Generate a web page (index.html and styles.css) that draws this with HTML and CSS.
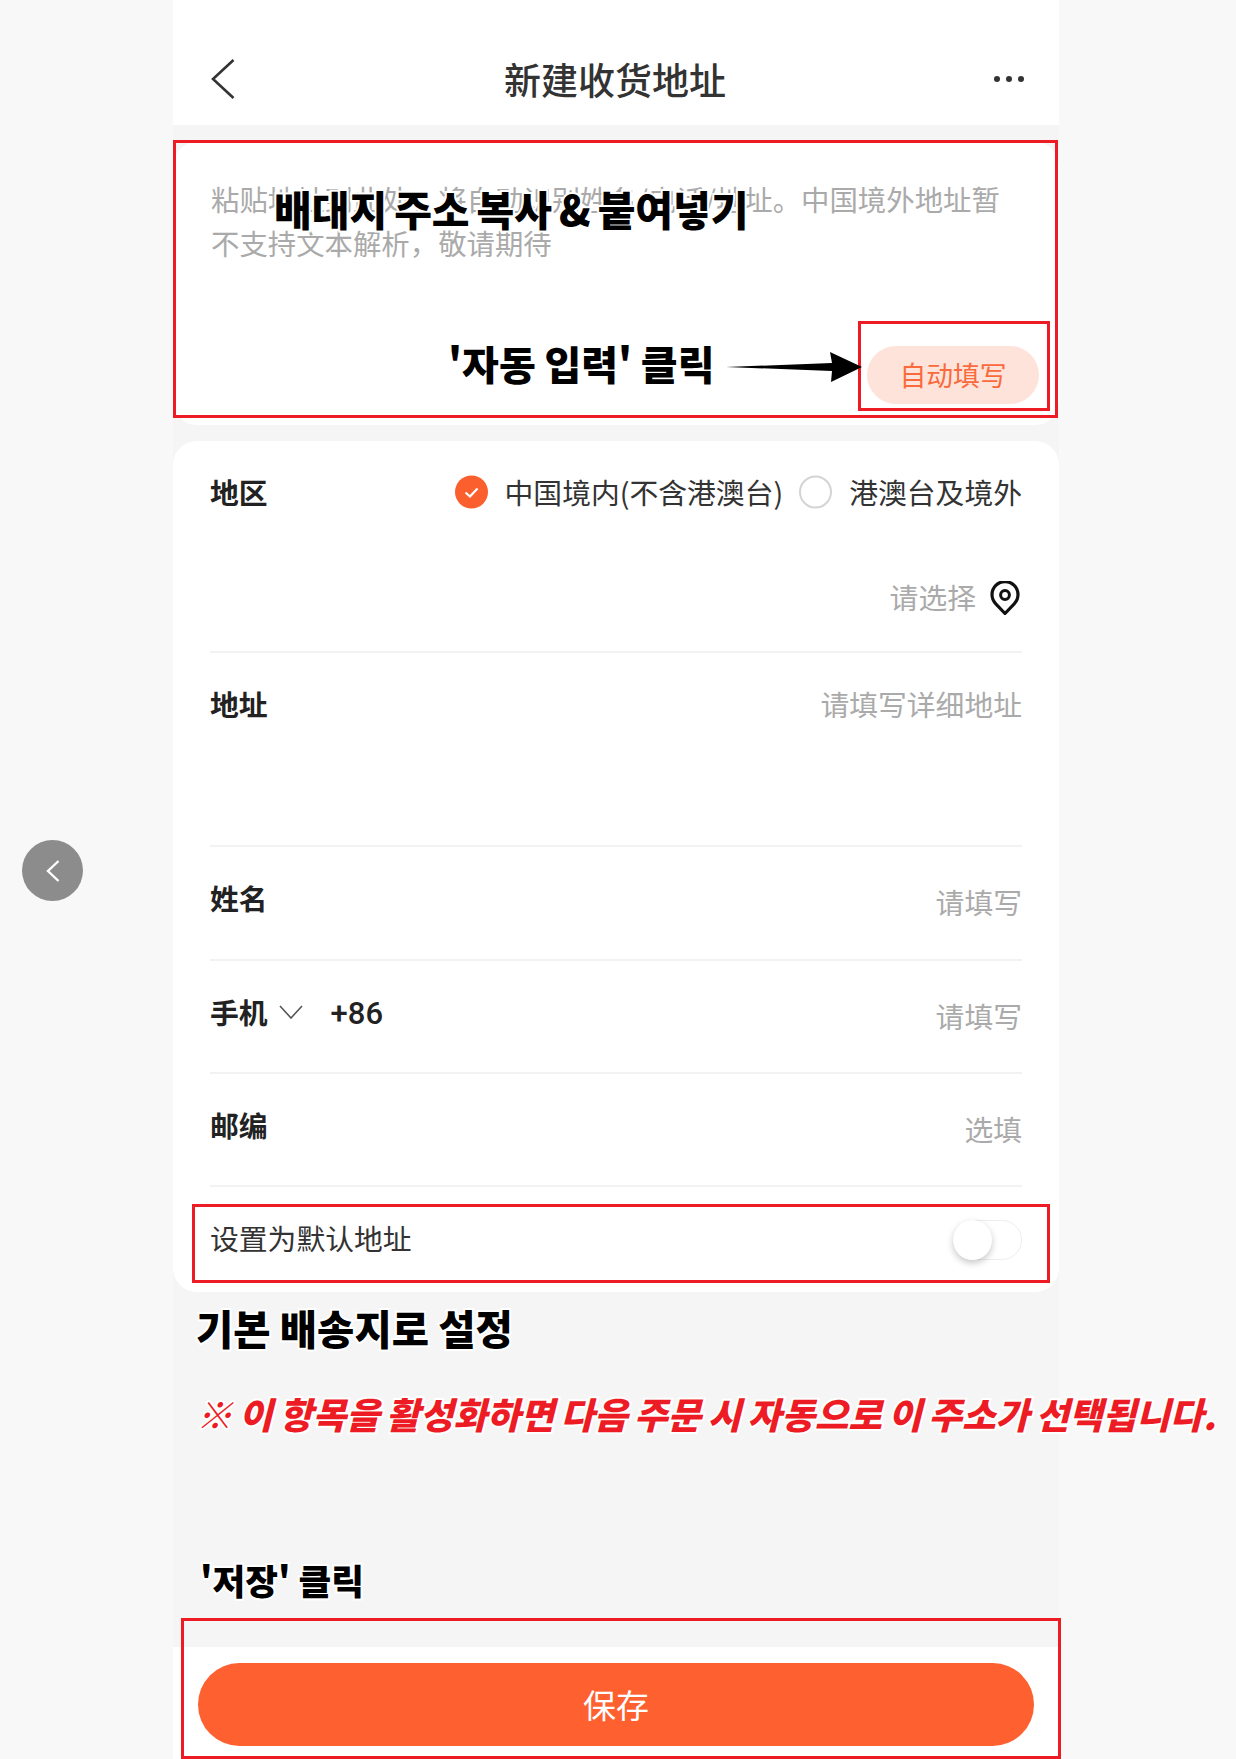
FILE: index.html
```html
<!DOCTYPE html>
<html lang="zh-CN">
<head>
<meta charset="utf-8">
<title>新建收货地址</title>
<link rel="stylesheet" href="styles.css">
</head>
<body>
<div class="page">
  <main class="phone">
    <header class="topbar">
      <svg class="back" width="24" height="40" viewBox="0 0 24 40"><path d="M22.5 1 L2 20 L22.5 39" fill="none" stroke="#333" stroke-width="2.6"/></svg>
      <h1 class="title">新建收货地址</h1>
      <div class="dots"><span></span><span></span><span></span></div>
    </header>

    <section class="card paste">
      <p class="paste-hint">粘贴地址到此处，将自动识别姓名/电话/地址。中国境外地址暂不支持文本解析，敬请期待</p>
      <button class="autofill">自动填写</button>
    </section>

    <section class="card form">
      <div class="row row-region">
        <div class="row-line">
          <span class="label">地区</span>
          <div class="radios">
            <svg class="radio" width="33" height="34" viewBox="0 0 33 34"><circle cx="16.5" cy="17" r="16.5" fill="#fb5f2d"/><path d="M10.5 17.5 L15 21.5 L22.5 13.5" fill="none" stroke="#fff" stroke-width="2.2"/></svg>
            <span class="radio-text">中国境内(不含港澳台)</span>
            <svg class="radio radio-off" width="33" height="34" viewBox="0 0 33 34"><circle cx="16.5" cy="17" r="15.5" fill="#fff" stroke="#d4d4d4" stroke-width="2"/></svg>
            <span class="radio-text">港澳台及境外</span>
          </div>
        </div>
        <div class="select-line">
          <span class="hint">请选择</span>
          <svg class="pin" width="30" height="34" viewBox="0 0 30 34"><path d="M15 32.5 L5.8 22.8 A13 13 0 1 1 24.2 22.8 Z" fill="none" stroke="#111" stroke-width="3.2" stroke-linejoin="round"/><circle cx="15" cy="14" r="4.4" fill="none" stroke="#111" stroke-width="3"/></svg>
        </div>
      </div>
      <div class="row row-address">
        <div class="row-line">
          <span class="label">地址</span>
          <span class="hint">请填写详细地址</span>
        </div>
      </div>
      <div class="row row-name">
        <div class="row-line">
          <span class="label">姓名</span>
          <span class="hint hint-low">请填写</span>
        </div>
      </div>
      <div class="row row-short">
        <div class="row-line">
          <span class="phone-field">
            <span class="label">手机</span>
            <svg class="caret" width="24" height="14" viewBox="0 0 24 14"><path d="M1 1 L12 13 L23 1" fill="none" stroke="#555" stroke-width="1.6"/></svg>
            <span class="code">+86</span>
          </span>
          <span class="hint hint-low">请填写</span>
        </div>
      </div>
      <div class="row row-short">
        <div class="row-line">
          <span class="label">邮编</span>
          <span class="hint hint-low">选填</span>
        </div>
      </div>
      <div class="default-line">
        <span class="default-text">设置为默认地址</span>
        <div class="toggle"><span class="knob"></span></div>
      </div>
    </section>

    <section class="notes" lang="ko">
      <p class="note note-main">기본 배송지로 설정</p>
      <p class="note note-red">※ 이 항목을 활성화하면 다음 주문 시 자동으로 이 주소가 선택됩니다.</p>
      <p class="note note-save">'저장' 클릭</p>
    </section>

    <footer class="savebar">
      <button class="save">保存</button>
    </footer>
  </main>

  <button class="float-back">
    <svg width="14" height="22" viewBox="0 0 14 22"><path d="M12.5 1 L2 11 L12.5 21" fill="none" stroke="#fff" stroke-width="2.4"/></svg>
  </button>

  <div class="mark mark-paste"></div>
  <div class="mark mark-auto"></div>
  <div class="mark mark-default"></div>
  <div class="mark mark-save"></div>
  <p class="note note-copy" lang="ko">배대지 주소 복사 &amp; 붙여넣기</p>
  <p class="note note-auto" lang="ko">'자동 입력' 클릭</p>
  <svg class="arrow" width="136" height="30" viewBox="0 0 136 30"><path d="M0 15 L106 11 L104 0 L136 15 L105 30 L106 19 Z" fill="#000"/></svg>
</div>
</body>
</html>
```
FILE: styles.css
```css
* { box-sizing: border-box; }
html, body { margin: 0; padding: 0; }
body {
  background: #f8f8f8;
  font-family: "Noto Sans CJK SC", "Noto Sans", sans-serif;
  color: #333;
}
p, h1 { margin: 0; }
button { border: 0; font-family: inherit; padding: 0; }

.page {
  position: relative;
  width: 1236px;
  height: 1759px;
  overflow: hidden;
}
.phone {
  width: 886px;
  height: 1759px;
  margin-left: 173px;
  background: #f5f5f5;
  display: flex;
  flex-direction: column;
}

.topbar {
  height: 125px;
  background: #fff;
  padding: 48px 35px 16px 33px;
  display: grid;
  grid-template-columns: 1fr auto 1fr;
  align-items: center;
}
.back { margin-left: 5px; }
.title {
  font-size: 37px;
  font-weight: 500;
  line-height: 50px;
  color: #333;
}
.dots { display: flex; justify-content: flex-end; gap: 6px; }
.dots span { width: 6px; height: 6px; border-radius: 50%; background: #333; }

.card { background: #fff; border-radius: 24px; }

.paste {
  margin-top: 17px;
  height: 283px;
  padding: 35px 20px 21px 38px;
  display: flex;
  flex-direction: column;
  justify-content: space-between;
}
.paste-hint {
  width: 800px;
  font-size: 28.4px;
  line-height: 44px;
  color: #aaa;
}
.autofill {
  align-self: flex-end;
  width: 172px;
  height: 58px;
  padding-bottom: 2px;
  border-radius: 29px;
  background: #fee3da;
  color: #f96a3c;
  font-size: 26.8px;
}

.form {
  margin-top: 16px;
  height: 851px;
  padding: 0 37px;
}
.row { border-bottom: 2px solid #f2f2f2; padding-top: 31px; }
.row-region { height: 212px; }
.row-address { height: 194px; }
.row-name { height: 114px; }
.row-short { height: 113px; }
.row-line {
  display: flex;
  justify-content: space-between;
  align-items: flex-start;
  height: 40px;
}
.label {
  font-size: 28.8px;
  font-weight: 700;
  line-height: 40px;
  color: #222;
}
.hint {
  font-size: 28.8px;
  line-height: 40px;
  color: #aaa;
}
.hint-low { margin-top: 4px; }

.radios { display: flex; align-items: center; height: 40px; }
.radio { flex: none; margin-right: 17px; }
.radio-off { margin-left: 16px; margin-right: 17px; }
.radio-text { font-size: 28.8px; line-height: 40px; color: #333; white-space: nowrap; }

.select-line {
  margin-top: 65px;
  display: flex;
  justify-content: flex-end;
  align-items: center;
  gap: 14px;
  height: 40px;
}
.pin { margin: 2px 2px 0 0; }

.phone-field { display: flex; align-items: center; height: 40px; }
.caret { margin-left: 11px; }
.code {
  margin-left: 28px;
  padding-top: 3px;
  font-family: "Roboto", sans-serif;
  font-size: 31px;
  font-weight: 500;
  line-height: 40px;
  color: #222;
}

.default-line {
  height: 104px;
  padding-top: 31px;
  display: flex;
  justify-content: space-between;
  align-items: flex-start;
}
.default-text { font-size: 28.8px; line-height: 40px; color: #333; }
.toggle {
  width: 69px;
  height: 40px;
  border: 1px solid #eee;
  border-radius: 20px;
  background: #fff;
  display: flex;
  align-items: center;
  margin-top: 2px;
}
.knob {
  width: 39px;
  height: 40px;
  margin-left: -1px;
  border-radius: 50%;
  background: #fff;
  box-shadow: 0 3px 7px rgba(0, 0, 0, 0.22);
}

.notes { flex: 1; position: relative; padding: 15px 0 0 23px; }
.note {
  font-family: "Noto Sans CJK KR", "Noto Sans", sans-serif;
  font-weight: 900;
  color: #000;
  white-space: nowrap;
  -webkit-text-stroke: 4px #fff;
  paint-order: stroke fill;
}
.note-main { font-size: 40.5px; line-height: 42px; word-spacing: -2px; }
.note-red {
  margin: 44px 0 0 0;
  font-size: 36.5px;
  line-height: 42px;
  font-style: italic;
  color: #ed1c24;
  word-spacing: -3.8px;
}
.note-save { margin: 124px 0 0 4px; font-size: 35.6px; line-height: 42px; word-spacing: -2px; }

.savebar {
  height: 112px;
  background: #fff;
  padding: 16px 25px 13px;
}
.save {
  width: 100%;
  height: 83px;
  padding-bottom: 2px;
  border-radius: 42px;
  background: #ff6030;
  color: #fff;
  font-size: 33px;
}

.float-back {
  position: absolute;
  left: 22px;
  top: 840px;
  width: 61px;
  height: 61px;
  border-radius: 50%;
  background: #8c8c8c;
  display: flex;
  align-items: center;
  justify-content: center;
}

.mark { position: absolute; border: 3px solid #ed1c24; }
.mark-paste { left: 173px; top: 140px; width: 885px; height: 278px; }
.mark-auto { left: 858px; top: 321px; width: 192px; height: 90px; }
.mark-default { left: 192px; top: 1204px; width: 858px; height: 79px; }
.mark-save { left: 181px; top: 1618px; width: 880px; height: 141px; }

.note-copy { position: absolute; left: 274px; top: 184px; font-size: 41px; line-height: 48px; word-spacing: -4.5px; }
.note-auto { position: absolute; left: 448px; top: 339px; font-size: 40px; line-height: 48px; word-spacing: -2.5px; }
.arrow { position: absolute; left: 726px; top: 352px; }
```
